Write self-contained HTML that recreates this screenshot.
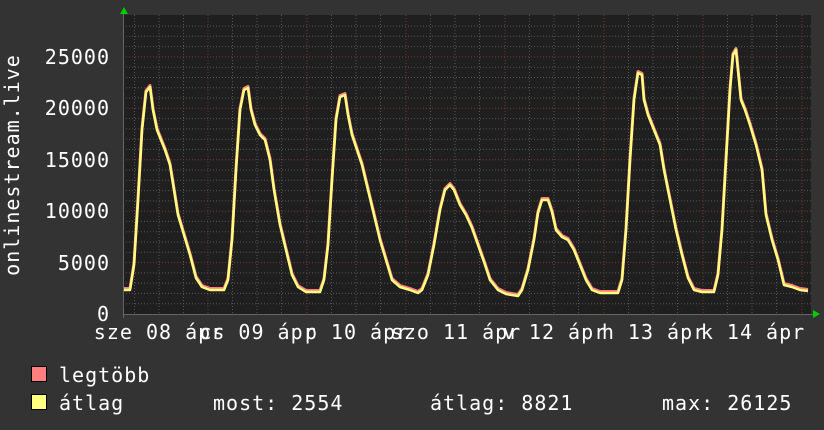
<!DOCTYPE html>
<html><head><meta charset="utf-8"><style>
html,body{margin:0;padding:0;background:#333;}
svg{display:block}
text{font-family:"DejaVu Sans Mono","Liberation Mono",monospace;fill:#fff;font-size:20px;letter-spacing:1px}
</style></head><body>
<svg width="824" height="430" viewBox="0 0 824 430">
<rect width="824" height="430" fill="#333"/>
<rect x="123" y="15" width="688" height="300" fill="#1f1f1f"/>
<g stroke="#555" stroke-width="1" stroke-dasharray="1,2">
<path d="M123 303.7H811M123 293.4H811M123 283.1H811M123 272.9H811M123 252.3H811M123 242H811M123 231.7H811M123 221.4H811M123 200.9H811M123 190.6H811M123 180.3H811M123 170H811M123 149.4H811M123 139.2H811M123 128.9H811M123 118.6H811M123 98.0H811M123 87.8H811M123 77.5H811M123 67.2H811M123 46.6H811M123 36.3H811M123 26.1H811"/>
<path d="M134.5 15V315M159 15V315M183.5 15V315M232.5 15V315M257 15V315M281.5 15V315M331.5 15V315M356 15V315M380.5 15V315M430.5 15V315M455 15V315M479.5 15V315M529.5 15V315M554 15V315M578.5 15V315M628.5 15V315M653 15V315M677.5 15V315M727.5 15V315M752 15V315M776.5 15V315"/>
</g>
<g stroke="#7a3535" stroke-width="1" stroke-dasharray="1,2">
<path d="M123 262.6H811M123 211.2H811M123 159.7H811M123 108.3H811M123 56.9H811"/>
<path d="M208 15V315M307 15V315M406 15V315M505 15V315M604 15V315M703 15V315M802 15V315"/>
</g>
<path d="M123 314.5H813M123.5 12V318" stroke="#666" stroke-width="1"/>
<polygon points="120,14 128,14 124,7" fill="#0c0"/>
<polygon points="813,310 813,318 820,314" fill="#0c0"/>
<g fill="none" stroke-linejoin="round">
<polyline stroke="#ff7f7f" stroke-width="3" transform="translate(0,-1.5)" points="124,290 130,290 134,265 138,200 142,130 146,92 150,87 153,110 157,130 161,140 165,150 170,165 174,190 178,215 184,235 190,255 196,278 202,287 210,290 224,290 228,280 232,240 236,170 240,110 244,90 248,88 251,110 255,125 260,135 265,140 270,160 274,190 280,225 286,250 292,275 298,287 306,292 320,292 324,280 328,245 332,180 336,120 340,97 345,95 348,115 352,135 357,150 362,165 368,190 374,215 380,240 386,260 392,280 400,287 410,290 418,293 422,290 428,275 434,245 440,210 445,190 450,185 454,190 460,205 466,215 472,228 478,245 484,262 490,280 498,290 506,294 518,296 522,290 528,270 534,240 538,213 542,200 548,200 552,212 556,230 562,237 568,240 574,250 580,265 586,280 592,290 600,293 618,293 622,280 626,230 630,160 634,100 638,73 642,75 644,100 648,115 654,130 660,145 664,170 670,200 676,230 682,255 688,278 694,290 702,292 714,292 718,275 722,230 726,160 730,90 733,55 736,50 739,80 741,100 745,110 750,125 756,145 762,170 766,215 772,240 778,260 784,285 792,287 800,290 808,291"/>
<polyline stroke="#ffff7f" stroke-width="2.5" points="124,290 130,290 134,265 138,200 142,130 146,92 150,87 153,110 157,130 161,140 165,150 170,165 174,190 178,215 184,235 190,255 196,278 202,287 210,290 224,290 228,280 232,240 236,170 240,110 244,90 248,88 251,110 255,125 260,135 265,140 270,160 274,190 280,225 286,250 292,275 298,287 306,292 320,292 324,280 328,245 332,180 336,120 340,97 345,95 348,115 352,135 357,150 362,165 368,190 374,215 380,240 386,260 392,280 400,287 410,290 418,293 422,290 428,275 434,245 440,210 445,190 450,185 454,190 460,205 466,215 472,228 478,245 484,262 490,280 498,290 506,294 518,296 522,290 528,270 534,240 538,213 542,200 548,200 552,212 556,230 562,237 568,240 574,250 580,265 586,280 592,290 600,293 618,293 622,280 626,230 630,160 634,100 638,73 642,75 644,100 648,115 654,130 660,145 664,170 670,200 676,230 682,255 688,278 694,290 702,292 714,292 718,275 722,230 726,160 730,90 733,55 736,50 739,80 741,100 745,110 750,125 756,145 762,170 766,215 772,240 778,260 784,285 792,287 800,290 808,291"/>
</g>
<g text-anchor="end">
<text x="110" y="64">25000</text>
<text x="110" y="115">20000</text>
<text x="110" y="167">15000</text>
<text x="110" y="218">10000</text>
<text x="110" y="270">5000</text>
<text x="110" y="321">0</text>
</g>
<text transform="translate(19,165) rotate(-90)" text-anchor="middle">onlinestream.live</text>
<g text-anchor="middle">
<text x="159" y="339">sze 08 ápr</text>
<text x="258" y="339">cs 09 ápr</text>
<text x="357" y="339">p 10 ápr</text>
<text x="456" y="339">szo 11 ápr</text>
<text x="555" y="339">v 12 ápr</text>
<text x="654" y="339">h 13 ápr</text>
<text x="753" y="339">k 14 ápr</text>
</g>
<rect x="31.5" y="366.5" width="15" height="15" fill="#ff7f7f" stroke="#000"/>
<rect x="31.5" y="394.5" width="15" height="15" fill="#ffff7f" stroke="#000"/>
<text x="59" y="382">legtöbb</text>
<text x="59" y="410">átlag</text>
<text x="213" y="410">most: 2554</text>
<text x="430" y="410">átlag: 8821</text>
<text x="662" y="410">max: 26125</text>
</svg>
</body></html>
